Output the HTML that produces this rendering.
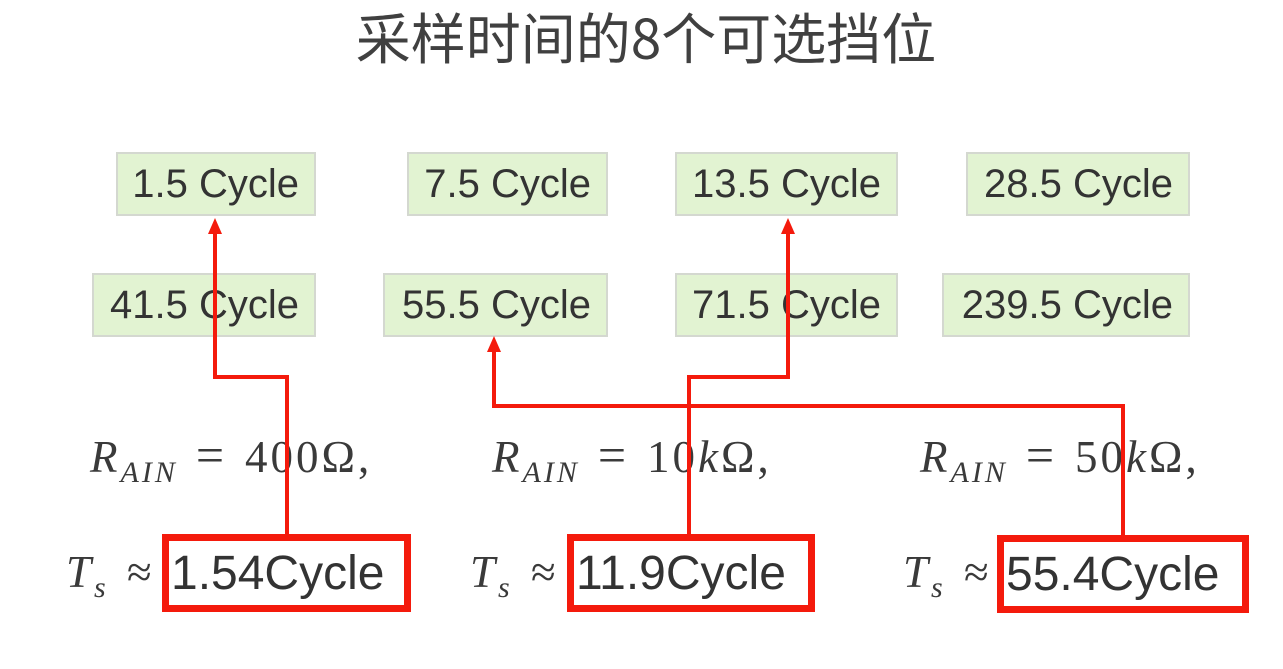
<!DOCTYPE html>
<html><head><meta charset="utf-8"><style>
body{margin:0;width:1283px;height:669px;background:#fff;position:relative;overflow:hidden;font-family:"Liberation Sans","Noto Sans CJK SC",sans-serif;color:#3a3a3a}
.t{position:absolute;left:0;width:1292px;top:-5px;text-align:center;font-size:55px;color:#404040;font-family:"Noto Sans CJK SC","Liberation Sans",sans-serif}
.b{position:absolute;background:#e2f3d2;border:2px solid #d4d8d0;box-sizing:border-box;height:64px;font-size:40px;line-height:60px;text-align:right;padding-right:15px;color:#333;white-space:nowrap}
.m{position:absolute;font-family:"Liberation Serif",serif;font-size:45px;color:#3a3a3a;white-space:nowrap;letter-spacing:3px}
.m i sub{font-size:30px}
.m .e{margin:0 18px;font-size:50px}
.rb{position:absolute;border:7px solid #f41a0c;box-sizing:border-box;height:78px;font-size:48px;line-height:66px;padding-left:2px;color:#333;background:#fff;white-space:nowrap}
</style></head><body>
<div class="t">采样时间的8个可选挡位</div>
<div class="b" style="left:116px;top:152px;width:200px">1.5 Cycle</div>
<div class="b" style="left:407px;top:152px;width:201px">7.5 Cycle</div>
<div class="b" style="left:675px;top:152px;width:223px">13.5 Cycle</div>
<div class="b" style="left:966px;top:152px;width:224px">28.5 Cycle</div>
<div class="b" style="left:92px;top:273px;width:224px">41.5 Cycle</div>
<div class="b" style="left:383px;top:273px;width:225px">55.5 Cycle</div>
<div class="b" style="left:675px;top:273px;width:223px">71.5 Cycle</div>
<div class="b" style="left:942px;top:273px;width:248px">239.5 Cycle</div>
<div class="m" style="left:90px;top:426px"><i>R<sub>AIN</sub></i><span class="e">=</span>400Ω,</div>
<div class="m" style="left:492px;top:426px"><i>R<sub>AIN</sub></i><span class="e">=</span>10<i>k</i>Ω,</div>
<div class="m" style="left:920px;top:426px"><i>R<sub>AIN</sub></i><span class="e">=</span>50<i>k</i>Ω,</div>
<div class="m" style="left:66px;top:546px"><i>T<sub>s</sub></i> <span style="margin-left:4px">≈</span></div>
<div class="m" style="left:470px;top:546px"><i>T<sub>s</sub></i> <span style="margin-left:4px">≈</span></div>
<div class="m" style="left:903px;top:546px"><i>T<sub>s</sub></i> <span style="margin-left:4px">≈</span></div>
<svg style="position:absolute;left:0;top:0" width="1283" height="669">
<g fill="none" stroke="#f41a0c" stroke-width="4">
<polyline points="287,537 287,377 215,377 215,232"/>
<polyline points="689,537 689,377 788,377 788,232"/>
<polyline points="1123,537 1123,406 494,406 494,350"/>
</g>
<g fill="#f41a0c">
<polygon points="215,218 208,234 222,234"/>
<polygon points="788,218 781,234 795,234"/>
<polygon points="494,336 487,352 501,352"/>
</g>
</svg>
<div class="rb" style="left:162px;top:534px;width:249px">1.54Cycle</div>
<div class="rb" style="left:567px;top:534px;width:248px">11.9Cycle</div>
<div class="rb" style="left:997px;top:535px;width:252px">55.4Cycle</div>
</body></html>
